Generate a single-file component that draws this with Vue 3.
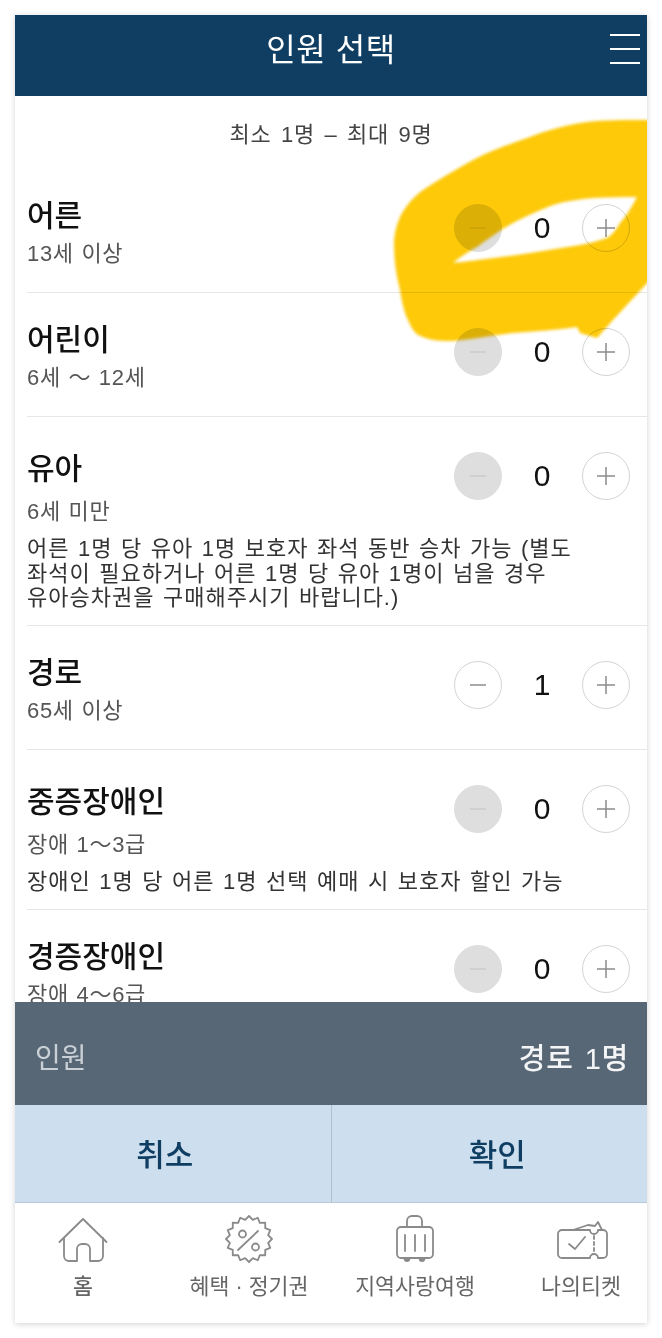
<template>
  <div class="page">
    <div class="phone">
      <header class="top">
        <h1>인원 선택</h1>
        <button class="menu" aria-label="메뉴"><i></i><i></i><i></i></button>
      </header>

      <section class="list">
        <p class="limit">최소 1명 – 최대 9명</p>
        <div v-for="row in rows" :key="row.name" class="row" :class="{ 'has-note': row.tall }">
          <div class="stepper">
            <span class="circle" :class="{ off: row.count === 0 }">
              <svg viewBox="0 0 24 24"><path d="M4 12h16" /></svg>
            </span>
            <span class="count">{{ row.count }}</span>
            <span class="circle">
              <svg viewBox="0 0 24 24"><path d="M3 12h18M12 3v18" /></svg>
            </span>
          </div>
          <div class="info">
            <h2>{{ row.name }}</h2>
            <p class="age">{{ row.age }}</p>
            <p v-if="row.note" class="note">{{ row.note }}</p>
          </div>
        </div>

        <svg class="scribble" viewBox="390 116 260 230" aria-hidden="true">
          <path
            fill-rule="evenodd"
            d="M650 120C625 120 605 120 587 122C565 125 545 131 530 137C510 144 490 151 473 160C455 170 438 180 423 190C412 198 405 207 400 217C396 226 394 235 394 243C394 260 396 275 400 290C402 302 404 312 408 320C412 330 416 335 423 337C432 341 442 341 453 341C475 339 495 335 513 333C535 331 557 330 577 327L580 333L597 338L613 320L650 280ZM453 263C460 257 468 252 477 247C488 239 500 230 513 223C526 216 540 210 553 205C566 201 580 199 593 198C608 197 622 197 637 197C632 207 626 216 620 223C616 230 612 235 607 238C598 241 590 243 580 245C563 248 547 250 530 253C505 257 478 260 453 263Z"
          />
        </svg>
      </section>

      <section class="summary">
        <span class="label">인원</span>
        <span class="total">경로 1명</span>
      </section>

      <section class="actions">
        <button>취소</button>
        <button>확인</button>
      </section>

      <nav class="tabs">
        <a class="tab">
          <svg viewBox="0 0 48 48" class="ico">
            <path d="M0.500 25 24 2 47.500 25" />
            <path d="M5 21V39a5 5 0 0 0 5 5h8V32a5 5 0 0 1 5-5h3a5 5 0 0 1 5 5v12h8a5 5 0 0 0 5-5V21" />
          </svg>
          <span class="strong">홈</span>
        </a>
        <a class="tab">
          <svg viewBox="0 0 48 48" class="ico">
            <path :d="badge" />
            <path d="M33 14 13 33" />
            <circle cx="17.500" cy="17" r="3.500" />
            <circle cx="30.500" cy="30" r="3.500" />
          </svg>
          <span>혜택 · 정기권</span>
        </a>
        <a class="tab">
          <svg viewBox="0 0 48 48" class="ico">
            <rect x="6" y="10" width="36" height="31" rx="4" />
            <path d="M16 10V4a5 5 0 0 1 5-5h5a5 5 0 0 1 5 5v6" />
            <path d="M14 18v16M24 18v16M34 18v16" />
            <path class="solid" d="M13.500 41h5a2.500 3 0 0 1-5 0zM28.500 41h5a2.500 3 0 0 1-5 0z" />
          </svg>
          <span>지역사랑여행</span>
        </a>
        <a class="tab">
          <svg viewBox="0 0 52 48" class="ico wide">
            <path d="M7 13H35a4 4 0 0 0 8 0h5a4 4 0 0 1 4 4V37a4 4 0 0 1-4 4H43a4 4 0 0 0-8 0H7a4 4 0 0 1-4-4V17a4 4 0 0 1 4-4z" />
            <path d="M18 13 33 8l7 1 3-4 4 8" />
            <path d="M14 27l6 5 10-12" />
            <path d="M39 19V35" stroke-dasharray="3 3" />
          </svg>
          <span>나의티켓</span>
        </a>
      </nav>
    </div>
  </div>
</template>

<script setup>
const rows = [
  { name: "어른", age: "13세 이상", count: 0 },
  { name: "어린이", age: "6세 ～ 12세", count: 0 },
  {
    name: "유아",
    age: "6세 미만",
    note: "어른 1명 당 유아 1명 보호자 좌석 동반 승차 가능 (별도 좌석이 필요하거나 어른 1명 당 유아 1명이 넘을 경우 유아승차권을 구매해주시기 바랍니다.)",
    tall: true,
    count: 0,
  },
  { name: "경로", age: "65세 이상", count: 1 },
  {
    name: "중증장애인",
    age: "장애 1～3급",
    note: "장애인 1명 당 어른 1명 선택 예매 시 보호자 할인 가능",
    tall: true,
    count: 0,
  },
  { name: "경증장애인", age: "장애 4～6급", count: 0 },
];

// zigzag outline of the discount badge
const teeth = 16;
const badge =
  Array.from({ length: teeth * 2 }, (_, i) => {
    const r = i % 2 ? 19.5 : 23;
    const a = (Math.PI * i) / teeth - Math.PI / 2;
    const x = 24 + r * Math.cos(a);
    const y = 22 + r * Math.sin(a);
    return `${i ? "L" : "M"}${x.toFixed(2)} ${y.toFixed(2)}`;
  }).join("") + "Z";
</script>

<style>
html,
body {
  margin: 0;
  background: #fff;
}
</style>

<style scoped>
.page {
  box-sizing: border-box;
  width: 662px;
  height: 1338px;
  padding: 15px;
  font-family: "Liberation Sans", "Noto Sans CJK KR", sans-serif;
}
.phone {
  display: flex;
  flex-direction: column;
  height: 1308px;
  background: #fff;
  box-shadow: 0 1px 6px rgba(0, 0, 0, 0.18);
}

.top {
  position: relative;
  flex: none;
  height: 81px;
  display: flex;
  align-items: center;
  justify-content: center;
  background: #0f3e62;
  color: #fff;
}
.top h1 {
  margin: 0 0 11px;
  font-size: 32px;
  line-height: 46px;
  font-weight: 400;
  letter-spacing: 0.6px;
}
.menu {
  position: absolute;
  top: 19px;
  right: 7px;
  display: flex;
  flex-direction: column;
  justify-content: space-between;
  width: 30px;
  height: 30px;
  padding: 0;
  border: 0;
  background: none;
}
.menu i {
  height: 2px;
  background: #fff;
}

.list {
  position: relative;
  flex: 1;
  min-height: 0;
  overflow: hidden;
}
.limit {
  margin: 0;
  height: 73px;
  padding-top: 23px;
  box-sizing: border-box;
  text-align: center;
  font-size: 22px;
  line-height: 32px;
  letter-spacing: 0.7px;
  word-spacing: 2.8px;
  color: #444;
}
.row {
  box-sizing: border-box;
  margin-left: 12px;
  padding: 27px 17px 12px 0;
  min-height: 124px;
  border-bottom: 1px solid #e6e6e6;
}
.row:last-of-type {
  border-bottom: 0;
}
.row.has-note {
  padding-top: 32px;
  padding-bottom: 14.5px;
}
.stepper {
  float: right;
  display: flex;
  align-items: center;
  gap: 24px;
  margin-top: 8px;
}
.has-note .stepper {
  margin-top: 3px;
}
.circle {
  box-sizing: border-box;
  width: 48px;
  height: 48px;
  display: flex;
  align-items: center;
  justify-content: center;
  border: 1.5px solid #d4d4d4;
  border-radius: 50%;
}
.circle svg {
  width: 24px;
  height: 24px;
  fill: none;
  stroke: #8c8c8c;
  stroke-width: 1.5;
}
.circle.off {
  background: #dedede;
  border-color: #dedede;
}
.circle.off svg {
  stroke: #cbcbcb;
}
.count {
  width: 32px;
  text-align: center;
  font-size: 30px;
  color: #111;
}
.info h2 {
  margin: 0;
  font-size: 30px;
  line-height: 40px;
  font-weight: 500;
  color: #111;
}
.age {
  margin: 0;
  padding-top: 2px;
  font-size: 22px;
  line-height: 32px;
  letter-spacing: 0.7px;
  word-spacing: 0.8px;
  color: #555;
}
.has-note .age {
  padding-top: 7px;
}
.note {
  margin: 9px 0 0;
  max-width: 556px;
  font-size: 22px;
  line-height: 24.5px;
  letter-spacing: 1px;
  word-spacing: 1.4px;
  word-break: keep-all;
  color: #333;
}
.scribble {
  position: absolute;
  left: 375px;
  top: 20px;
  width: 260px;
  height: 230px;
  fill: #fdc908;
  filter: blur(1.5px);
  mix-blend-mode: multiply;
}

.summary {
  flex: none;
  height: 103px;
  display: flex;
  align-items: center;
  justify-content: space-between;
  padding: 4px 18px 0 20px;
  box-sizing: border-box;
  background: #586775;
}
.label {
  font-size: 28px;
  color: #c9d0d6;
}
.total {
  font-size: 29px;
  font-weight: 500;
  letter-spacing: 0.7px;
  word-spacing: 2.4px;
  color: #f2f4f5;
}

.actions {
  flex: none;
  height: 98px;
  display: flex;
  background: #cddfef;
  border-bottom: 1px solid #b9c8d6;
  box-sizing: border-box;
}
.actions button {
  flex: 1;
  padding: 0 16px 3px 0;
  border: 0;
  background: none;
  font-family: inherit;
  font-size: 31px;
  font-weight: 500;
  color: #0f3e62;
}
.actions button + button {
  padding: 0 0 3px 16px;
  border-left: 1px solid #b4c0cb;
}

.tabs {
  flex: none;
  height: 120px;
  display: flex;
  justify-content: space-between;
  padding-left: 2px;
}
.tab {
  width: 132px;
  display: flex;
  flex-direction: column;
  align-items: center;
  padding-top: 14px;
  box-sizing: border-box;
  white-space: nowrap;
  font-size: 21.7px;
  line-height: 32px;
  color: #666;
}
.tab .strong {
  font-weight: 500;
}
.ico {
  width: 48px;
  height: 48px;
  margin-bottom: 6px;
  overflow: visible;
  fill: none;
  stroke: #8a8a8a;
  stroke-width: 1.8;
  stroke-linejoin: round;
  stroke-linecap: round;
}
.ico.wide {
  width: 52px;
}
.ico .solid {
  fill: #8a8a8a;
}
</style>
